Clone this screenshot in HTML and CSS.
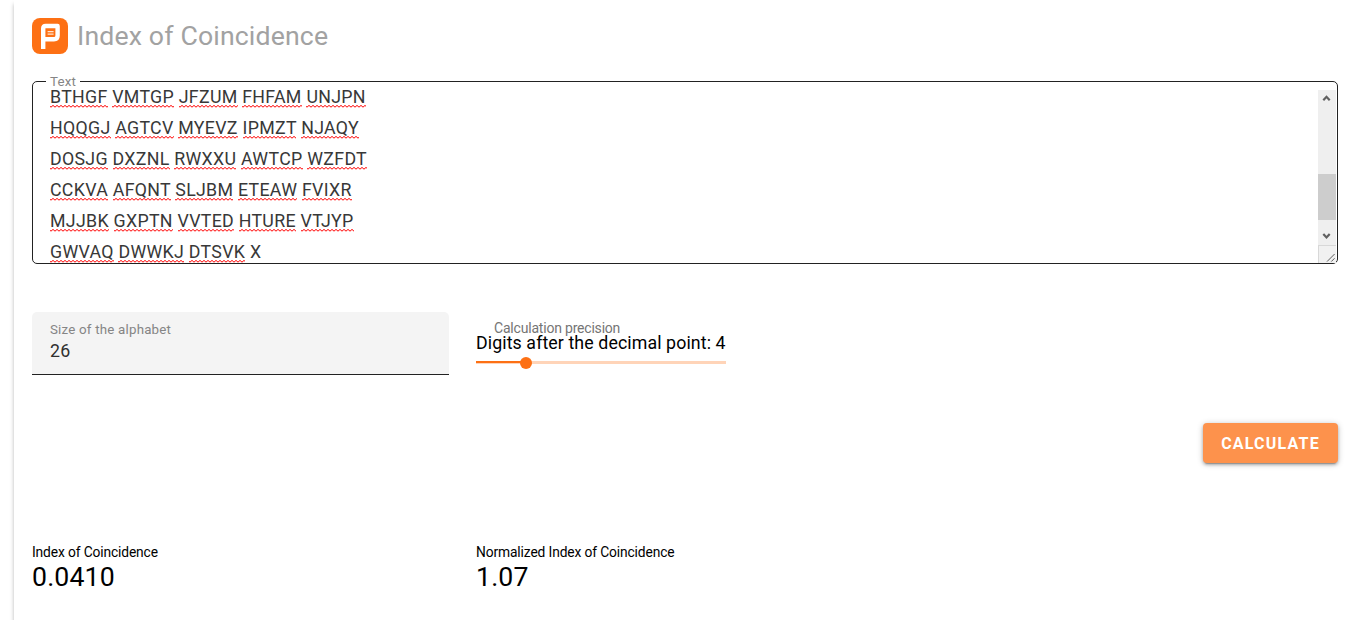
FILE: index.html
```
<!DOCTYPE html>
<html lang="en">
<head>
<meta charset="utf-8">
<title>Index of Coincidence</title>
<link rel="stylesheet" href="styles.css">
</head>
<body>
<main class="panel">
  <header class="heading">
    <svg class="logo" viewBox="0 0 36 36" aria-hidden="true">
      <rect width="36" height="36" rx="8" fill="#fd7014"/>
      <path d="M11.2 31V10.5Q11.2 8 13.7 8H25.6V17.5Q25.6 21.2 22 21.2H13" fill="none" stroke="#fff" stroke-width="4.4" stroke-linejoin="round"/>
      <path d="M15.6 13.6H21.6M15.6 16.2H21.6" stroke="#ffe3d0" stroke-width="1.3"/>
    </svg>
    <h1>Index of Coincidence</h1>
  </header>

  <section class="text-field">
    <span class="notch-label">Text</span>
    <div class="viewport">
      <div class="lines">
        <div><u>BTHGF</u> <u>VMTGP</u> <u>JFZUM</u> <u>FHFAM</u> <u>UNJPN</u></div>
        <div><u>HQQGJ</u> <u>AGTCV</u> <u>MYEVZ</u> <u>IPMZT</u> <u>NJAQY</u></div>
        <div><u>DOSJG</u> <u>DXZNL</u> <u>RWXXU</u> <u>AWTCP</u> <u>WZFDT</u></div>
        <div><u>CCKVA</u> <u>AFQNT</u> <u>SLJBM</u> <u>ETEAW</u> <u>FVIXR</u></div>
        <div><u>MJJBK</u> <u>GXPTN</u> <u>VVTED</u> <u>HTURE</u> <u>VTJYP</u></div>
        <div><u>GWVAQ</u> <u>DWWKJ</u> <u>DTSVK</u> X</div>
      </div>
      <div class="scrollbar">
        <svg class="arrow" viewBox="0 0 18 16"><path d="M5.3 10.2L8.5 6.8L11.7 10.2" fill="none" stroke="#606060" stroke-width="2.2"/></svg>
        <div class="thumb"></div>
        <svg class="arrow" viewBox="0 0 18 16"><path d="M5.3 5L8.5 8.4L11.7 5" fill="none" stroke="#606060" stroke-width="2.2"/></svg>
      </div>
    </div>
    <svg class="resizer" viewBox="0 0 18 18"><path d="M8.5 16.5L16.5 8.5M13 16.5L16.5 13" fill="none" stroke="#555"/></svg>
  </section>

  <section class="controls">
    <div class="filled">
      <span class="filled-label">Size of the alphabet</span>
      <span class="filled-value">26</span>
    </div>
    <div class="precision">
      <span class="precision-label">Calculation precision</span>
      <span class="precision-value">Digits after the decimal point: 4</span>
      <div class="track"><div class="fill"></div><div class="knob"></div></div>
    </div>
  </section>

  <div class="actions"><button class="calculate" type="button">CALCULATE</button></div>

  <section class="results">
    <div><span class="result-label">Index of Coincidence</span><span class="result-value">0.0410</span></div>
    <div><span class="result-label">Normalized Index of Coincidence</span><span class="result-value">1.07</span></div>
  </section>
</main>
</body>
</html>
```
FILE: styles.css
```
* { box-sizing: border-box; }
body {
  margin: 0;
  height: 620px;
  overflow: hidden;
  background: #fff;
  color: #000;
  font-family: Roboto, "Liberation Sans", sans-serif;
}
.panel {
  height: 640px;
  margin-left: 14px;
  padding: 18px 18px 0;
  background: #fff;
  box-shadow: 0 4px 4px rgba(0, 0, 0, .28);
}
.heading { display: flex; height: 36px; gap: 9px; align-items: center; }
.logo { width: 36px; height: 36px; }
h1 {
  margin: 0;
  font-size: 26.67px;
  font-weight: 400;
  line-height: 36px;
  color: #a2a2a2;
  letter-spacing: .15px;
}
.text-field {
  position: relative;
  height: 183px;
  margin-top: 27px;
  padding: 8px 1px 0 17px;
  border: 1px solid #222;
  border-radius: 5px;
}
.notch-label {
  position: absolute;
  left: 13px;
  top: -8px;
  padding: 0 4px;
  background: #fff;
  color: #858585;
  font-size: 13.33px;
  line-height: 16px;
  letter-spacing: .18px;
}
.viewport { display: flex; justify-content: space-between; height: 173px; overflow: hidden; }
.lines {
  margin-top: -8px;
  color: #383838;
  font-size: 17.78px;
  line-height: 31px;
  letter-spacing: .3px;
}
.lines u {
  padding-bottom: 2px;
  text-decoration: none;
  background: url("data:image/svg+xml,%3Csvg xmlns='http://www.w3.org/2000/svg' width='4' height='3'%3E%3Cpath d='M-1 .4L1 2.2L3 .4L5 2.2' fill='none' stroke='%23f00' stroke-width='1'/%3E%3C/svg%3E") repeat-x left bottom 1px;
}
.scrollbar {
  display: flex;
  flex-direction: column;
  width: 18px;
  height: 155px;
  background: #efefef;
}
.arrow { display: block; width: 18px; height: 16px; }
.thumb { height: 46px; margin: 68px 0 9px; background: #cdcdcd; }
.resizer {
  position: absolute;
  right: 1px;
  bottom: 0;
  width: 18px;
  height: 18px;
  background: #f1f1f1;
  border-left: 1px solid #d8d8d8;
  border-top: 1px solid #d8d8d8;
}
.controls { display: flex; gap: 27px; margin-top: 48px; }
.filled {
  display: flex;
  flex-direction: column;
  width: 417px;
  height: 63px;
  padding: 10px 18px 0;
  border-bottom: 1px solid #222;
  border-radius: 5px 5px 0 0;
  background: #f4f4f4;
}
.filled-label { color: #858585; font-size: 13.33px; line-height: 16px; letter-spacing: .2px; }
.filled-value { margin-top: 2px; color: #303030; font-size: 17.78px; line-height: 22px; letter-spacing: .167px; }
.precision { display: flex; flex-direction: column; width: 250px; padding-top: 8px; }
.precision-label { padding-left: 18px; color: #757575; font-size: 14px; line-height: 16px; letter-spacing: -.2px; }
.precision-value { margin-top: -3px; font-size: 17.78px; line-height: 21px; letter-spacing: .1px; white-space: nowrap; }
.track { position: relative; height: 3px; margin-top: 7px; background: #ffd4b8; }
.fill { width: 50px; height: 2px; background: #fd7014; }
.knob {
  position: absolute;
  left: 44px;
  top: -4px;
  width: 12px;
  height: 12px;
  border-radius: 50%;
  background: #fd7014;
}
.actions { display: flex; justify-content: flex-end; margin-top: 48px; }
.calculate {
  width: 135px;
  height: 40px;
  padding: 0;
  border: 0;
  border-radius: 4px;
  background: #fd924c;
  color: #fff;
  font: 700 16px/41px Roboto, sans-serif;
  letter-spacing: 1.2px;
  box-shadow: 0 3px 1px -2px rgba(0, 0, 0, .2), 0 2px 3px rgba(0, 0, 0, .2), 0 1px 6px rgba(0, 0, 0, .24);
}
.results { display: grid; grid-template-columns: 444px 1fr; margin-top: 80px; }
.results div { display: flex; flex-direction: column; }
.result-label { font-size: 13.8px; line-height: 18px; letter-spacing: -.13px; }
.result-value { font-size: 26.67px; line-height: 32px; letter-spacing: .15px; }
```
